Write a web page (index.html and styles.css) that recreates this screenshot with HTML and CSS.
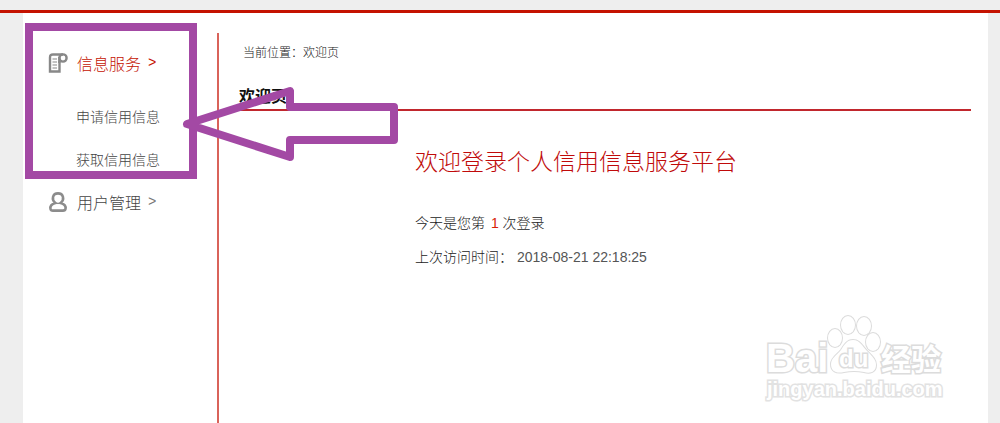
FILE: index.html
```
<!DOCTYPE html>
<html lang="zh-CN">
<head>
  <meta charset="UTF-8">
  <meta name="viewport" content="width=device-width, initial-scale=1.0">
  <title>个人信用信息服务平台</title>
  <link rel="stylesheet" href="styles.css">
</head>
<body>
  <header class="topbar"></header>

  <div class="container">
    <nav class="sidebar">
      <a href="#" class="menu active">
        <svg class="icon" viewBox="0 0 20 20" fill="none" stroke="#888" stroke-width="2.400">
          <path d="M15 1.500H5Q2 1.500 2 4.500V18.500H11.500V8"/>
          <circle cx="15" cy="5" r="3.600"/>
          <path d="M11.300 4v6"/>
          <path d="M4.500 6h4.500M4.500 9h4.500M4.500 12h4.500M4.500 15h4.500" stroke-width="1.200"/>
        </svg>
        <span>信息服务</span><span class="more">&gt;</span>
      </a>
      <a href="#" class="submenu">申请信用信息</a>
      <a href="#" class="submenu">获取信用信息</a>
      <a href="#" class="menu">
        <svg class="icon" viewBox="0 0 20 22" fill="none" stroke="#8c8c8c" stroke-width="2.800">
          <path d="M7 12C2.500 8 4 1.500 10 1.500S17.500 8 13 12C16.500 13 18.800 15.500 18.300 18.500Q18 20.500 15.500 20.500H4.500Q2 20.500 1.700 18.500C1.200 15.500 3.500 13 7 12Z"/>
          <path d="M6.500 12.500h7" stroke-width="1.500"/>
        </svg>
        <span>用户管理</span><span class="more">&gt;</span>
      </a>
    </nav>

    <main class="content">
      <p class="breadcrumb">当前位置：欢迎页</p>
      <h2>欢迎页</h2>
      <div class="welcome">
        <h1>欢迎登录个人信用信息服务平台</h1>
        <p>今天是您第 <span class="count">1</span> 次登录</p>
        <p>上次访问时间： <span class="time">2018-08-21 22:18:25</span></p>
      </div>
    </main>

    <!-- box and arrow around the menu -->
    <svg class="marker" width="380" height="170" fill="none" stroke="#a349a4">
      <rect x="6" y="14" width="164" height="148" stroke-width="8"/>
      <path d="M164 111L267 78V94H371V127H267V144Z" stroke-width="8" stroke-linejoin="round"/>
    </svg>

    <svg class="watermark" width="190" height="96">
      <text x="2" y="60" class="brand">Bai</text>
      <g class="paw">
        <ellipse cx="71" cy="26" rx="7" ry="9"/>
        <ellipse cx="84" cy="13" rx="7" ry="9"/>
        <ellipse cx="100" cy="14" rx="7" ry="9"/>
        <ellipse cx="109" cy="30" rx="7" ry="9"/>
        <path d="M89 28C96 28 98 34 103 39C109 45 112 48 112 53C112 60 106 62 100 60Q90 58 80 60C72 62 67 59 67 52C67 46 73 43 77 38C80 33 83 28 89 28Z"/>
      </g>
      <text x="75" y="55" class="du">du</text>
      <text x="117" y="58" class="cn">经验</text>
      <text x="3" y="84" class="url">jingyan.baidu.com</text>
    </svg>
  </div>
</body>
</html>
```
FILE: styles.css
```
body {
  font-family: "Liberation Sans", "Noto Sans CJK SC", sans-serif;
  font-weight: 300;
  margin: 0;
  background-color: #eee;
  color: #222;
}

a {
  color: #444;
  text-decoration: none;
}

.topbar {
  height: 10px;
  border-bottom: 3px solid #c41200;
}

.container {
  position: relative;
  display: flex;
  box-sizing: border-box;
  min-height: calc(100vh - 13px);
  margin: 0 12px 0 23px;
  padding-top: 20px;
  background-color: #fff;
}

.sidebar {
  width: 194px;
  flex-shrink: 0;
  border-right: 2px solid #d9635a;
}

.menu {
  display: flex;
  align-items: center;
  height: 24px;
  margin: 18px 0 0 25px;
  font-size: 16px;
}

.menu.active,
.active .more {
  color: #c41200;
}

.icon {
  width: 20px;
  height: 20px;
  margin-right: 9px;
}

.more {
  margin-left: 7px;
  color: #777;
  font-family: "Liberation Mono", monospace;
  font-size: 14px;
}

.submenu {
  display: block;
  margin: 30px 0 0 53px;
  font-size: 14px;
  line-height: 24px;
}

.submenu + .submenu {
  margin-top: 19px;
}

.content {
  flex: 1;
  margin: 0 17px 0 20px;
}

.breadcrumb {
  margin: 10px 0 0 4px;
  font-size: 12px;
  line-height: 20px;
}

h2 {
  margin: 22px 0 0;
  border-bottom: 2px solid #c1272d;
  color: #111;
  font-size: 16px;
  line-height: 24px;
}

.welcome {
  margin: 34px 0 0 176px;
}

h1 {
  margin: 0 0 32px;
  color: #c00a0a;
  font-size: 23px;
  font-weight: 300;
  line-height: 34px;
}

.welcome p {
  margin: 0 0 10px;
  font-size: 14px;
  line-height: 24px;
}

.count {
  margin-left: 2px;
  color: #d81e06;
}

.time {
  color: #555;
}

.marker {
  position: absolute;
  top: 0;
  left: 0;
}

.watermark {
  position: absolute;
  top: 299px;
  right: 34px;
  fill: #fff;
  stroke: #dcdcdc;
  stroke-width: 3px;
  paint-order: stroke;
  font-weight: bold;
}

.paw {
  stroke-width: 2px;
}

.brand {
  font-size: 40px;
}

.du {
  font-size: 24px;
}

.cn {
  font-size: 30px;
}

.url {
  font-size: 20px;
  stroke: #e2e2e2;
}
```
